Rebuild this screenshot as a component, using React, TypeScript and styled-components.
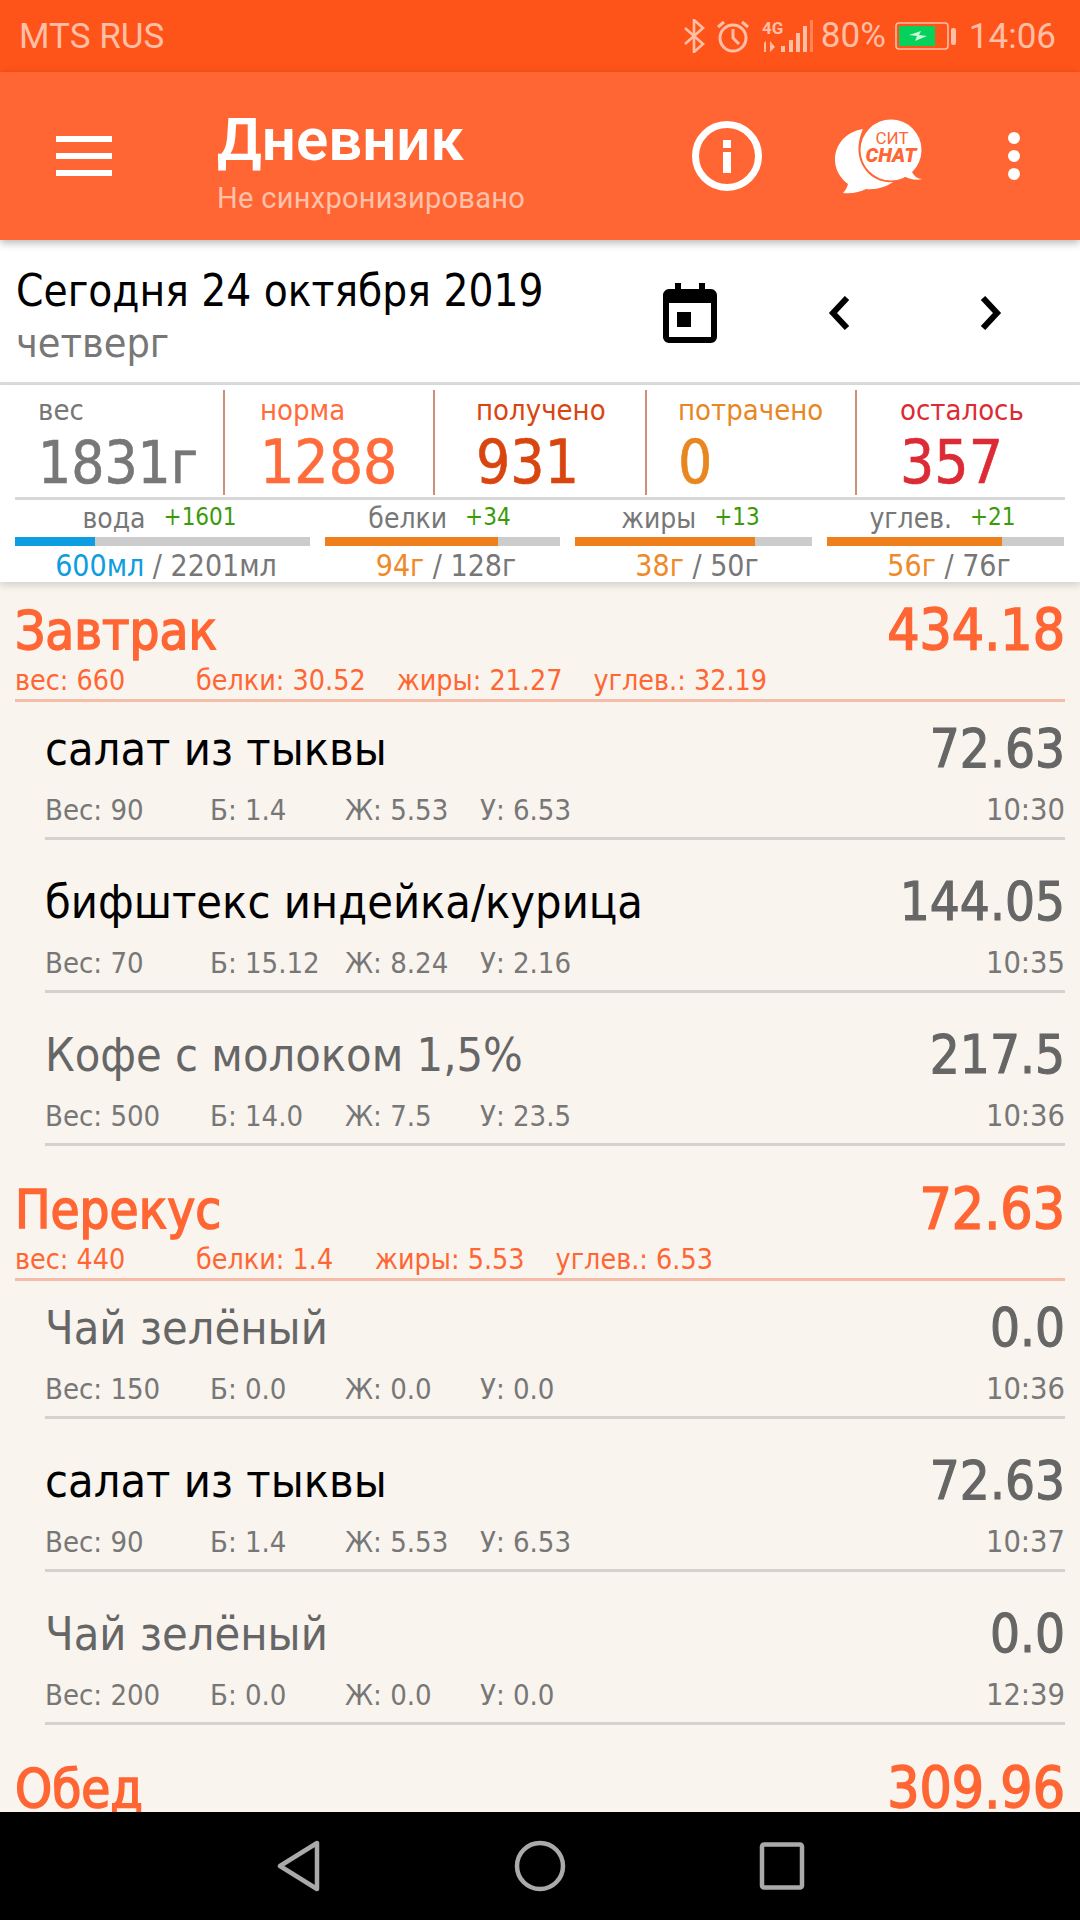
import React from "react";
import styled, { createGlobalStyle } from "styled-components";

const Global = createGlobalStyle`
  html, body { margin: 0; padding: 0; background: #000; }
  * { box-sizing: border-box; }
`;

const FONT = `"DejaVu Sans Condensed", "DejaVu Sans", sans-serif`;

const Screen = styled.div`
  width: 1080px; height: 1920px; display: flex; flex-direction: column;
  overflow: hidden; background: #f9f4ee; font-family: ${FONT};
`;
const StatusBar = styled.div`
  height: 72px; flex: none; background: #ff5419; color: #ffbfa6;
  display: flex; align-items: center; justify-content: space-between;
  padding: 0 24px 0 19px; font-family: Roboto, sans-serif; font-size: 35px;
`;
const StatusRight = styled.div`display: flex; align-items: center;`;
const Percent = styled.span`margin: 0 9px 0 7px; position: relative; top: -1px;`;
const Clock = styled.span`margin-left: 12px;`;
const AppBar = styled.div`
  height: 168px; flex: none; background: #ff6633; display: flex; align-items: center;
  position: relative; z-index: 2; box-shadow: 0 3px 8px rgba(0,0,0,.28);
`;
const Burger = styled.div`
  width: 56px; margin: 0 105px 0 56px; display: flex; flex-direction: column; gap: 11px;
  & > i { display: block; height: 6px; background: #fff; }
`;
const TitleBlock = styled.div`
  flex: 1; display: flex; flex-direction: column; font-family: Roboto, sans-serif; padding-top: 6px;
`;
const Title = styled.div`font-size: 60px; font-weight: 600; color: #fff; line-height: 72px;`;
const Subtitle = styled.div`font-size: 29px; color: #ffc1aa; line-height: 34px; margin-top: 5px; letter-spacing: .3px;`;
const BarIcons = styled.div`display: flex; align-items: center; margin-right: 60px;`;
const Dots = styled.div`
  display: flex; flex-direction: column; gap: 6px; margin-left: 85px;
  & > i { display: block; width: 12px; height: 12px; border-radius: 50%; background: #fff; }
`;
const DateBar = styled.div`
  height: 145px; flex: none; background: #fff; display: flex; padding: 0 0 0 16px;
  border-bottom: 3px solid #dedede; align-items: flex-start;
`;
const DateText = styled.div`flex: 1; padding-top: 21px;`;
const DateMain = styled.div`font-size: 43.7px; color: #000; line-height: 60px;`;
const DateDay = styled.div`font-size: 41px; color: #777; line-height: 44px;`;
const DateIcons = styled.div`display: flex; align-items: center; padding-top: 43px;`;
const Panel = styled.div`
  flex: none; background: #fff; height: 197px; padding: 5px 15px 0;
  position: relative; z-index: 1; box-shadow: 0 3px 8px rgba(0,0,0,.16);
`;
const Stats = styled.div`
  display: grid; grid-template-columns: 210px 210px 212px 210px 1fr; height: 110px;
  border-bottom: 3px solid #d8d8d8;
`;
const Stat = styled.div<{ $pad: number; $color: string; $last?: boolean }>`
  padding-left: ${p => p.$pad}px; color: ${p => p.$color};
  border-right: ${p => (p.$last ? "none" : "2px solid #cb8f7a")};
  margin-bottom: 2px; white-space: nowrap;
`;
const StatLabel = styled.div`font-size: 29px; line-height: 40px;`;
const StatValue = styled.div`font-size: 60px; line-height: 60px; margin-top: 2px; -webkit-text-stroke: .6px currentColor;`;
const Weight = styled.span`font-size: 58px;`;
const Macros = styled.div`
  display: grid; grid-template-columns: 295px 235px 237px 237px; column-gap: 15px;
`;
const Macro = styled.div`display: flex; flex-direction: column; align-items: center;`;
const MacroHead = styled.div`
  height: 37px; font-size: 28px; line-height: 38px; color: #777; display: flex; gap: 18px; white-space: nowrap;
  padding-right: 6px;
`;
const Plus = styled.span`font-size: 24px; color: #3c9a0a; line-height: 34px;`;
const Track = styled.div`width: 100%; height: 9px; background: #ccc;`;
const Fill = styled.div<{ $color: string }>`height: 100%; background: ${p => p.$color};`;
const MacroFoot = styled.div`font-size: 30px; line-height: 40px; color: #777; white-space: nowrap; padding-left: 7px;`;
const Have = styled.span<{ $color: string }>`color: ${p => p.$color};`;
const List = styled.div`flex: 1; overflow: hidden; padding-top: 14px;`;
const Meal = styled.div`
  & + & { padding-top: 29px; }
`;
const Section = styled.div`
  margin: 0 15px; padding-bottom: 3px; border-bottom: 3px solid #f5bca8; color: #ff6633;
`;
const SectionTop = styled.div`display: flex; justify-content: space-between; align-items: center; height: 70px;`;
const SectionTitle = styled.div`font-size: 52.5px; line-height: 70px; -webkit-text-stroke: 1.5px currentColor;`;
const SectionValue = styled.div`font-size: 56.5px; line-height: 70px; -webkit-text-stroke: 1.5px currentColor;`;
const SectionSub = styled.div`display: flex; height: 30px; font-size: 28.4px; line-height: 30px; white-space: nowrap;`;
const SubWeight = styled.span`width: 181px; flex: none;`;
const SubItem = styled.span`min-width: 148px; margin-right: 31px;`;
const Row = styled.div<{ $first?: boolean }>`
  margin: 0 15px 0 45px; border-bottom: 3px solid #d4d2ce;
  height: ${p => (p.$first ? 138 : 153)}px; padding-top: ${p => (p.$first ? 17 : 32)}px;
`;
const RowTop = styled.div`display: flex; justify-content: space-between; align-items: center; height: 60px;`;
const Name = styled.div<{ $dim?: boolean }>`font-size: 46.5px; line-height: 60px; color: ${p => (p.$dim ? "#666" : "#000")};`;
const Value = styled.div`font-size: 52.5px; line-height: 60px; color: #666; -webkit-text-stroke: 1.1px currentColor;`;
const RowBottom = styled.div`
  display: grid; grid-template-columns: 165px 135px 135px 1fr; margin-top: 11px;
  font-size: 29px; line-height: 40px; color: #777; white-space: nowrap;
`;
const Tail = styled.span`display: flex; justify-content: space-between;`;
const Time = styled.span`font-size: 30.5px;`;
const NavBar = styled.div`
  height: 108px; flex: none; background: #000; display: flex; align-items: center; justify-content: center;
  gap: 193px; position: relative; z-index: 3;
`;
const Svg = styled.svg<{ $ml?: number }>`display: block; flex: none; margin-left: ${p => p.$ml ?? 0}px;`;

const Bluetooth = () => (
  <Svg width="22" height="34" viewBox="0 0 22 34" fill="none" stroke="#ffbfa6" strokeWidth="2.6">
    <path d="M2 9l18 16-9 8V1l9 8L2 25" />
  </Svg>
);
const Alarm = () => (
  <Svg $ml={11} width="34" height="34" viewBox="0 0 34 34" fill="none" stroke="#ffbfa6" strokeWidth="3">
    <circle cx="17" cy="19" r="13" />
    <path d="M17 10v9l6 6M2 8l6-5M32 8l-6-5" />
  </Svg>
);
const Signal = () => (
  <Svg $ml={12} width="52" height="34" viewBox="0 0 52 34">
    <text x="0" y="15" fontFamily="Roboto, sans-serif" fontWeight="700" fontSize="17" fill="#ffbfa6">4G</text>
    <path d="M2 24l2-2v11H2zM8 22l5 6-5 5zM19 27h4v6h-4zM27 21h4v12h-4zM34 14h4v19h-4zM41 7h4v26h-4z" fill="#ffbfa6" />
    <rect x="48" y="1" width="3" height="32" fill="#ffbfa6" opacity=".45" />
  </Svg>
);
const Battery = () => (
  <Svg width="62" height="28" viewBox="0 0 62 28">
    <rect x="1" y="1" width="52" height="26" rx="3" fill="none" stroke="#ffbfa6" strokeWidth="1.6" />
    <rect x="4" y="4" width="36" height="20" fill="#06d15b" />
    <path d="M14 13l12-4-2 4 8 1-12 5 2-5z" fill="#c7f8d8" />
    <rect x="56" y="6" width="5" height="17" rx="2" fill="#ffbfa6" />
  </Svg>
);
const InfoIcon = () => (
  <Svg width="72" height="72" viewBox="0 0 72 72">
    <circle cx="36" cy="36" r="31.5" fill="none" stroke="#fff" strokeWidth="7" />
    <rect x="32" y="20" width="8" height="8" fill="#fff" />
    <rect x="32" y="32" width="8" height="21" fill="#fff" />
  </Svg>
);
const ChatIcon = () => (
  <Svg $ml={72} width="88" height="76" viewBox="0 0 88 76">
    <path d="M28 11C10 14 0 27 0 42c0 10 6 19 13 24-1 4-3 7-5 9 9 1 17-1 23-4 10 1 20-2 27-7C38 66 20 48 24 24c1-5 2-9 4-13z" fill="#fff" />
    <circle cx="56" cy="32" r="30.5" fill="#fff" />
    <path d="M76 52c2 5 6 9 11 9-5 2-14 0-20-4z" fill="#fff" />
    <text x="57" y="26" textAnchor="middle" fontFamily="Roboto, sans-serif" fontSize="17" fill="#ff6633">СИТ</text>
    <text x="56" y="44" textAnchor="middle" fontFamily="Roboto, sans-serif" fontWeight="900" fontStyle="italic" fontSize="20" fill="#ff6633">CHAT</text>
  </Svg>
);
const CalendarIcon = () => (
  <Svg $ml={2} width="54" height="60" viewBox="0 0 54 60">
    <path d="M12 0h6v6h18V0h6v6h6c3 0 6 3 6 6v42c0 3-3 6-6 6H6c-3 0-6-3-6-6V12c0-3 3-6 6-6h6zM6 20v34h42V20z" fill="#000" />
    <rect x="14" y="29" width="14" height="15" fill="#000" />
  </Svg>
);
const Chevron = ({ left, ml }: { left?: boolean; ml: number }) => (
  <Svg $ml={ml} width="22" height="34" viewBox="0 0 22 34" fill="none" stroke="#000" strokeWidth="6">
    <path d={left ? "M19 2L5 17l14 15" : "M3 2l14 15L3 32"} />
  </Svg>
);

const stats = [
  { label: "вес", value: "1831г", pad: 23, color: "#777" },
  { label: "норма", value: "1288", pad: 35, color: "#ff6b3a" },
  { label: "получено", value: "931", pad: 41, color: "#d9450f" },
  { label: "потрачено", value: "0", pad: 31, color: "#e8861f" },
  { label: "осталось", value: "357", pad: 43, color: "#dc2b35" },
];
const macros = [
  { label: "вода", plus: "+1601", have: 600, total: 2201, unit: "мл", bar: "#0e9de0" },
  { label: "белки", plus: "+34", have: 94, total: 128, unit: "г", bar: "#ee7f1c" },
  { label: "жиры", plus: "+13", have: 38, total: 50, unit: "г", bar: "#ee7f1c" },
  { label: "углев.", plus: "+21", have: 56, total: 76, unit: "г", bar: "#ee7f1c" },
];
type Item = { name: string; value: string; w: string; b: string; f: string; u: string; t: string; dim?: boolean };
type MealData = { title: string; value: string; sub?: { w: string; b: string; f: string; u: string }; items: Item[] };
const meals: MealData[] = [
  { title: "Завтрак", value: "434.18", sub: { w: "660", b: "30.52", f: "21.27", u: "32.19" }, items: [
    { name: "салат из тыквы", value: "72.63", w: "90", b: "1.4", f: "5.53", u: "6.53", t: "10:30" },
    { name: "бифштекс индейка/курица", value: "144.05", w: "70", b: "15.12", f: "8.24", u: "2.16", t: "10:35" },
    { name: "Кофе с молоком 1,5%", value: "217.5", w: "500", b: "14.0", f: "7.5", u: "23.5", t: "10:36", dim: true },
  ] },
  { title: "Перекус", value: "72.63", sub: { w: "440", b: "1.4", f: "5.53", u: "6.53" }, items: [
    { name: "Чай зелёный", value: "0.0", w: "150", b: "0.0", f: "0.0", u: "0.0", t: "10:36", dim: true },
    { name: "салат из тыквы", value: "72.63", w: "90", b: "1.4", f: "5.53", u: "6.53", t: "10:37" },
    { name: "Чай зелёный", value: "0.0", w: "200", b: "0.0", f: "0.0", u: "0.0", t: "12:39", dim: true },
  ] },
  { title: "Обед", value: "309.96", items: [] },
];

export default function App() {
  return (
    <Screen>
      <Global />
      <StatusBar>
        <span>MTS RUS</span>
        <StatusRight>
          <Bluetooth /><Alarm /><Signal />
          <Percent>80%</Percent>
          <Battery />
          <Clock>14:06</Clock>
        </StatusRight>
      </StatusBar>
      <AppBar>
        <Burger><i /><i /><i /></Burger>
        <TitleBlock>
          <Title>Дневник</Title>
          <Subtitle>Не синхронизировано</Subtitle>
        </TitleBlock>
        <BarIcons>
          <InfoIcon /><ChatIcon />
          <Dots><i /><i /><i /></Dots>
        </BarIcons>
      </AppBar>
      <DateBar>
        <DateText>
          <DateMain>Сегодня 24 октября 2019</DateMain>
          <DateDay>четверг</DateDay>
        </DateText>
        <DateIcons>
          <CalendarIcon />
          <Chevron left ml={111} />
          <Chevron ml={130} />
          <Svg $ml={78} width="0" height="0" />
        </DateIcons>
      </DateBar>
      <Panel>
        <Stats>
          {stats.map((s, i) => (
            <Stat key={s.label} $pad={s.pad} $color={s.color} $last={i === 4}>
              <StatLabel>{s.label}</StatLabel>
              <StatValue>{i === 0 ? <Weight>{s.value}</Weight> : s.value}</StatValue>
            </Stat>
          ))}
        </Stats>
        <Macros>
          {macros.map(m => (
            <Macro key={m.label}>
              <MacroHead>{m.label} <Plus>{m.plus}</Plus></MacroHead>
              <Track><Fill $color={m.bar} style={{ width: `${(m.have / m.total) * 100}%` }} /></Track>
              <MacroFoot>
                <Have $color={m.label === "вода" ? "#0e9de0" : "#ee8a2a"}>{m.have}{m.unit}</Have> / {m.total}{m.unit}
              </MacroFoot>
            </Macro>
          ))}
        </Macros>
      </Panel>
      <List>
        {meals.map(meal => (
          <Meal key={meal.title}>
            <Section>
              <SectionTop>
                <SectionTitle>{meal.title}</SectionTitle>
                <SectionValue>{meal.value}</SectionValue>
              </SectionTop>
              {meal.sub && (
                <SectionSub>
                  <SubWeight>вес: {meal.sub.w}</SubWeight>
                  <SubItem>белки: {meal.sub.b}</SubItem>
                  <SubItem>жиры: {meal.sub.f}</SubItem>
                  <SubItem>углев.: {meal.sub.u}</SubItem>
                </SectionSub>
              )}
            </Section>
            {meal.items.map((it, i) => (
              <Row key={i} $first={i === 0}>
                <RowTop>
                  <Name $dim={it.dim}>{it.name}</Name>
                  <Value>{it.value}</Value>
                </RowTop>
                <RowBottom>
                  <span>Вес: {it.w}</span>
                  <span>Б: {it.b}</span>
                  <span>Ж: {it.f}</span>
                  <Tail><span>У: {it.u}</span><Time>{it.t}</Time></Tail>
                </RowBottom>
              </Row>
            ))}
          </Meal>
        ))}
      </List>
      <NavBar>
        <Svg width="46" height="52" viewBox="0 0 46 52" fill="none" stroke="#aaa" strokeWidth="4.5" strokeLinejoin="round">
          <path d="M42 3v46L5 26z" />
        </Svg>
        <Svg width="52" height="52" viewBox="0 0 52 52" fill="none" stroke="#aaa" strokeWidth="4.5">
          <circle cx="26" cy="26" r="23" />
        </Svg>
        <Svg width="46" height="48" viewBox="0 0 46 48" fill="none" stroke="#aaa" strokeWidth="4.5">
          <rect x="3" y="2.5" width="40" height="43" rx="2" />
        </Svg>
      </NavBar>
    </Screen>
  );
}
